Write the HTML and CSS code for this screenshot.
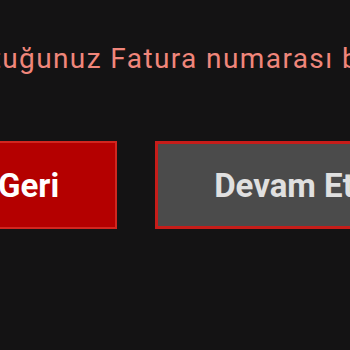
FILE: index.html
```html
<html>
<head>
<title>Fatura</title>
<link rel="stylesheet" href="styles.css">
</head>
<body>
<div class="screen">
<p class="message">Okuttuğunuz Fatura numarası bulunamadı</p>
<div class="buttonRow">
<button class="btn btnBack">Geri</button>
<button class="btn btnNext">Devam Et</button>
</div>
</div>
</body>
</html>
```

FILE: styles.css
```css
html, body {
margin: 0;
padding: 0;
background-color: #141314;
overflow: hidden;
}

.screen {
width: 700px;
margin-left: -60px;
font-family: Roboto, "Liberation Sans", sans-serif;
}

.message {
margin: 0 0 0 -12px;
padding-top: 42px;
white-space: nowrap;
font-size: 28px;
line-height: 33px;
letter-spacing: 1.4px;
color: #f0867b;
}

.buttonRow {
display: flex;
gap: 38px;
margin-top: 66px;
}

.btn {
height: 88px;
padding: 0 56px;
font-family: Roboto, "Liberation Sans", sans-serif;
font-size: 33px;
font-weight: bold;
}

.btnBack {
background-color: #b40000;
border: 2px solid #d1261f;
color: #ffffff;
}

.btnNext {
background-color: #4b4b4b;
border: 3px solid #c61d1a;
color: #e0e0e0;
}
```
